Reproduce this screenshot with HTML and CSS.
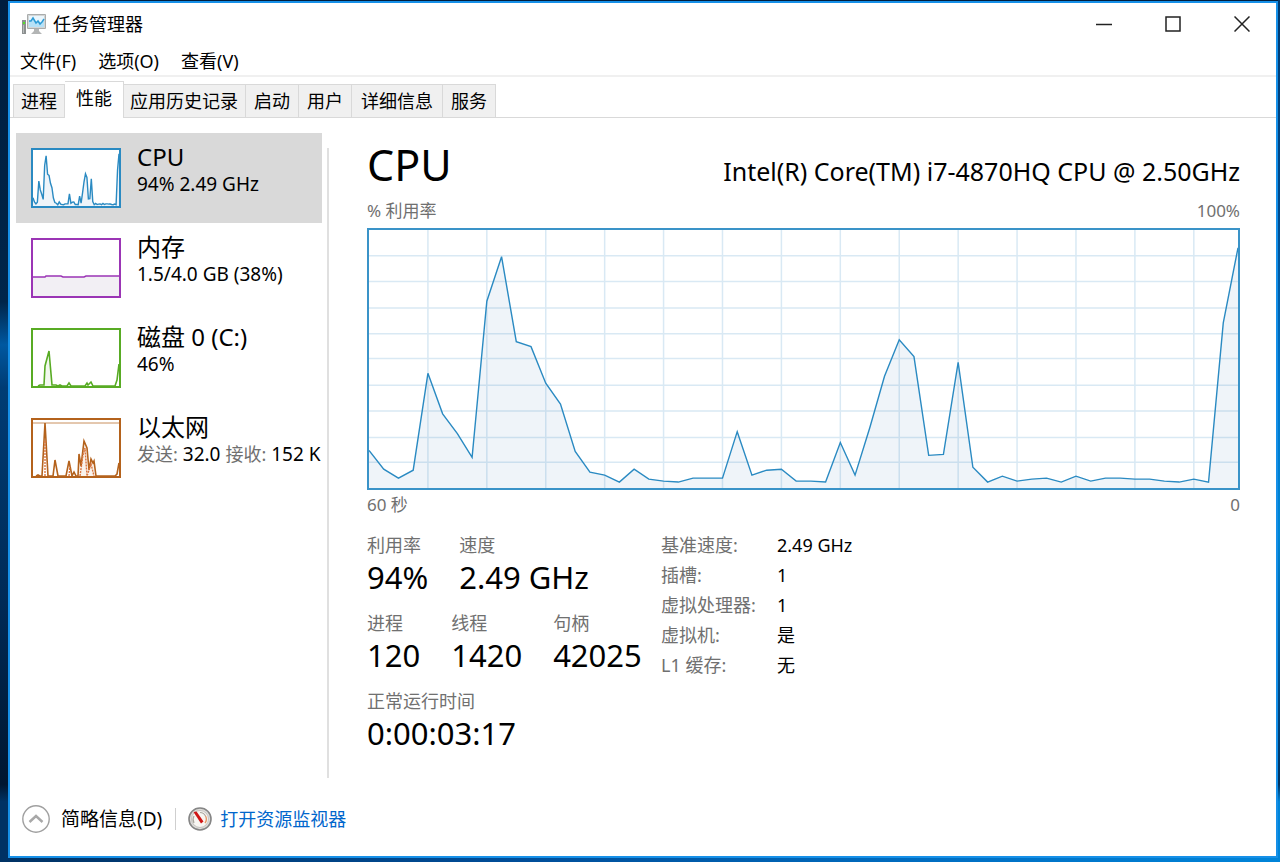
FILE: index.html
```html
<!DOCTYPE html>
<html lang="zh-CN">
<head>
<meta charset="utf-8">
<title>任务管理器</title>
<link rel="stylesheet" href="styles.css">
</head>
<body>
<svg class="defs" aria-hidden="true">
  <symbol id="cpu-history" viewBox="0 0 59 261" preserveAspectRatio="none">
    <polygon class="area" points="0,261 0,223 1,242 2,251 3,243 4,145 5,186 6,206 7,230 8,72 9,27 10,113 11,118 12,155 13,176 14,224 15,245 16,248 17,255 18,242 19,252 20,254 21,255 22,251 23,251 24,251 25,204 26,248 27,243 28,242 29,254 30,254 31,255 32,215 33,248 34,200 35,148 36,111 37,128 38,228 39,227 40,134 41,240 42,255 43,249 44,254 45,252 46,251 47,255 48,249 49,254 50,251 51,251 52,252 53,252 54,254 55,255 56,252 57,255 58,94 59,18 59,261"/>
    <polyline class="line" points="0,223 1,242 2,251 3,243 4,145 5,186 6,206 7,230 8,72 9,27 10,113 11,118 12,155 13,176 14,224 15,245 16,248 17,255 18,242 19,252 20,254 21,255 22,251 23,251 24,251 25,204 26,248 27,243 28,242 29,254 30,254 31,255 32,215 33,248 34,200 35,148 36,111 37,128 38,228 39,227 40,134 41,240 42,255 43,249 44,254 45,252 46,251 47,255 48,249 49,254 50,251 51,251 52,252 53,252 54,254 55,255 56,252 57,255 58,94 59,18"/>
  </symbol>
</svg>
<div class="window">
  <header class="titlebar">
    <svg class="app-icon" viewBox="0 0 24 22" aria-hidden="true">
      <rect x="0" y="7" width="4" height="14" fill="#8c9090"/>
      <rect x="1" y="9" width="2" height="2" fill="#55e02a"/>
      <rect x="1" y="12" width="1" height="8" fill="#b9bcbc"/>
      <rect x="5" y="1" width="19" height="15" rx="1" fill="#a9acac"/>
      <rect x="6" y="2" width="17" height="13" fill="#d4d6d6"/>
      <rect x="7" y="3" width="15" height="11" fill="#e9f6fd"/>
      <path d="M7 8L9 8L11 6L14 10L17 8L19 11L22 7V14H7Z" fill="#b5e1f7"/>
      <path d="M7 8H9L11 5L14 10L16 8L18 11L20 9L22 6" fill="none" stroke="#2c9bd6" stroke-width="1.5"/>
      <path d="M12 16H17V18L20 21H9L12 18Z" fill="#b3b5b5"/>
    </svg>
    <h1 class="title">任务管理器</h1>
    <div class="controls">
      <button class="control" type="button" aria-label="最小化"><svg viewBox="0 0 16 16"><path d="M0 8.5H16"/></svg></button>
      <button class="control" type="button" aria-label="最大化"><svg viewBox="0 0 16 16"><path d="M1 1H15V15H1Z"/></svg></button>
      <button class="control" type="button" aria-label="关闭"><svg viewBox="0 0 16 16"><path d="M0.5 0.5L15.5 15.5M15.5 0.5L0.5 15.5"/></svg></button>
    </div>
  </header>
  <nav class="menu">
    <button type="button">文件(F)</button>
    <button type="button">选项(O)</button>
    <button type="button">查看(V)</button>
  </nav>
  <div class="tabs" role="tablist">
    <button class="tab" type="button" role="tab">进程</button>
    <button class="tab active" type="button" role="tab" aria-selected="true">性能</button>
    <button class="tab history" type="button" role="tab">应用历史记录</button>
    <button class="tab" type="button" role="tab">启动</button>
    <button class="tab" type="button" role="tab">用户</button>
    <button class="tab roomy" type="button" role="tab">详细信息</button>
    <button class="tab" type="button" role="tab">服务</button>
  </div>
  <div class="content">
    <aside class="sidebar">
      <button class="resource selected" type="button">
        <svg class="thumb cpu"><use href="#cpu-history"/></svg>
        <span class="info"><span class="name">CPU</span><span class="detail">94% 2.49 GHz</span></span>
      </button>
      <button class="resource" type="button">
        <svg class="thumb memory" viewBox="0 0 86 56" preserveAspectRatio="none">
          <path class="area" d="M0 56V37H12L13 36H28L30 37H51L53 36H86V56Z"/>
          <path class="line" d="M0 37H12L13 36H28L30 37H51L53 36H86"/>
        </svg>
        <span class="info"><span class="name">内存</span><span class="detail">1.5/4.0 GB (38%)</span></span>
      </button>
      <button class="resource" type="button">
        <svg class="thumb disk" viewBox="0 0 86 56" preserveAspectRatio="none">
          <path class="area" d="M5 56L11 55L12 36L16 21L19 55V56Z"/>
          <path class="line" d="M5 56L7 55H11L12 36L16 21L19 55H23L25 56L27 55L29 56H34L36 53L38 56H52L54 53L55 55L58 52L60 56H82L84 50L86 34"/>
        </svg>
        <span class="info"><span class="name">磁盘 0 (C:)</span><span class="detail">46%</span></span>
      </button>
      <button class="resource" type="button">
        <svg class="thumb network" viewBox="0 0 86 56" preserveAspectRatio="none">
          <path class="thin" d="M0 3H86"/>
          <path class="area" d="M45 56L46 34L49 43L51 21L54 28L55 49L58 39L61 41L62 56Z"/>
          <path class="line" d="M3 56L5 55L7 56H9L12 3L15 56H20L22 40L25 56H33L36 41L39 56L41 52L43 56H45L46 34L48 46L51 21L54 28L56 50L58 39L60 43L61 41L63 56H82L84 54L86 43"/>
          <path class="dots" d="M12 56V20M36 56L37 46M47 56L50 35L52 28L54 56L58 44L61 56"/>
        </svg>
        <span class="info"><span class="name">以太网</span><span class="detail"><span class="muted">发送:</span> 32.0 <span class="muted">接收:</span> 152 K</span></span>
      </button>
    </aside>
    <main class="main">
      <div class="heading">
        <h2>CPU</h2>
        <span class="model">Intel(R) Core(TM) i7-4870HQ CPU @ 2.50GHz</span>
      </div>
      <div class="axis top"><span>% 利用率</span><span>100%</span></div>
      <div class="chart cpu">
        <svg class="grid" viewBox="0 0 59 261" preserveAspectRatio="none" aria-hidden="true">
          <path d="M4 0V261M8 0V261M12 0V261M16 0V261M20 0V261M24 0V261M28 0V261M32 0V261M36 0V261M40 0V261M44 0V261M48 0V261M52 0V261M56 0V261M0 26H59M0 52H59M0 79H59M0 105H59M0 130H59M0 157H59M0 183H59M0 210H59M0 235H59"/>
        </svg>
        <svg class="plot" role="img" aria-label="CPU 利用率"><use href="#cpu-history"/></svg>
      </div>
      <div class="axis bottom"><span>60 秒</span><span>0</span></div>
      <div class="stats">
        <div class="live">
          <dl class="group">
            <div><dt>利用率</dt><dd>94%</dd></div>
            <div><dt>速度</dt><dd>2.49 GHz</dd></div>
          </dl>
          <dl class="group">
            <div><dt>进程</dt><dd>120</dd></div>
            <div><dt>线程</dt><dd>1420</dd></div>
            <div><dt>句柄</dt><dd>42025</dd></div>
          </dl>
          <dl class="group">
            <div><dt>正常运行时间</dt><dd>0:00:03:17</dd></div>
          </dl>
        </div>
        <table class="facts">
          <tr><th scope="row">基准速度:</th><td>2.49 GHz</td></tr>
          <tr><th scope="row">插槽:</th><td>1</td></tr>
          <tr><th scope="row">虚拟处理器:</th><td>1</td></tr>
          <tr><th scope="row">虚拟机:</th><td>是</td></tr>
          <tr><th scope="row">L1 缓存:</th><td>无</td></tr>
        </table>
      </div>
    </main>
  </div>
  <footer class="footer">
    <button class="fewer" type="button">
      <svg viewBox="0 0 28 28" aria-hidden="true"><circle cx="14" cy="14" r="13.2" fill="#fff" stroke="#a0a0a0" stroke-width="1.4"/><path d="M7.500 17L14 11L20.500 17" fill="none" stroke="#a8a8a8" stroke-width="2.4"/></svg>
      <span>简略信息(D)</span>
    </button>
    <span class="separator"></span>
    <a class="monitor" href="#">
      <svg viewBox="0 0 24 24" aria-hidden="true">
        <circle cx="12" cy="12" r="11" fill="#deddda" stroke="#858585" stroke-width="1.6"/>
        <circle cx="12" cy="12" r="8.5" fill="#f8f6f2" stroke="#c5c3c0"/>
        <path d="M6 16A7 7 0 0 1 6 9M12 5.5A6.5 6.5 0 0 1 17.500 9" fill="none" stroke="#aaa79f" stroke-width="1.2"/>
        <path d="M17.500 9A6.500 6.500 0 0 1 17 16" fill="none" stroke="#e49a6c" stroke-width="1.4"/>
        <path d="M5.500 5L8.500 4.500L15.500 14.500L13 16.500Z" fill="#cf1616"/>
      </svg>
      <span>打开资源监视器</span>
    </a>
  </footer>
</div>
</body>
</html>
```
FILE: styles.css
```css
* {
  box-sizing: border-box;
}

body {
  margin: 0;
  min-height: 100vh;
  display: flex;
  padding: 1px 2px 4px 8px;
  font-family: "Noto Sans", "Noto Sans CJK SC", sans-serif;
  font-size: 18px;
  line-height: 20px;
  color: #000;
  background:
    linear-gradient(90deg, #003264, #004d98 40%, #0070c4 75%, #0084d8) bottom / 100% 4px no-repeat,
    linear-gradient(180deg, #003a70, #004a8c 25%, #0078cc 45%, #0086d4 62%, #004a86 80%, #003260 91%, #0084d8 93%) right / 2px 100% no-repeat,
    linear-gradient(180deg, #001e3e, #00254a 35%, #0058a0 40%, #003c74 45%, #002a56 70%, #001630 91%, #003264 93%);
}

h1,
h2,
dl,
dd {
  margin: 0;
  font-weight: 400;
}

button {
  margin: 0;
  padding: 0;
  border: 0;
  background: none;
  font: inherit;
  color: inherit;
}

.defs {
  position: absolute;
  width: 0;
  height: 0;
}

.window {
  flex: 1;
  min-width: 0;
  display: flex;
  flex-direction: column;
  border: 2px solid #1690e8;
  background: #fff;
}

.titlebar {
  display: flex;
  align-items: center;
  height: 42px;
  padding-left: 12px;
}

.app-icon {
  width: 24px;
  height: 22px;
}

.title {
  flex: 1;
  margin-left: 7px;
  font-size: 18px;
}

.controls {
  display: flex;
}

.control {
  width: 69px;
  height: 42px;
  display: flex;
  align-items: center;
  justify-content: center;
}

.control svg {
  width: 16px;
  height: 16px;
  fill: none;
  stroke: #222;
  stroke-width: 1.5;
}

.menu {
  display: flex;
  gap: 22px;
  padding: 6px 10px 4px;
  border-bottom: 2px solid #f0f0f0;
}

.tabs {
  display: flex;
  align-items: flex-end;
  height: 41px;
  padding-left: 3px;
  border-bottom: 1px solid #d9d9d9;
}

.tab {
  height: 33px;
  padding: 0 8px;
  border: 1px solid #d9d9d9;
  border-width: 1px 1px 0 0;
  background: #f0f0f0;
}

.tab:first-child {
  border-left-width: 1px;
  padding: 0 7px;
}

.tab.active {
  height: 37px;
  margin-bottom: -1px;
  padding: 0 11px 4px;
  background: #fff;
}

.tab.history {
  padding: 0 7px 0 6px;
}

.tab.roomy {
  padding: 0 9px;
}

.content {
  flex: 1;
  display: grid;
  grid-template-columns: 311px 1fr;
  padding: 15px 36px 4px 6px;
}

.sidebar {
  overflow: hidden;
}

.resource {
  display: flex;
  gap: 16px;
  width: calc(100% - 5px);
  height: 90px;
  padding: 15px 0 0 15px;
  text-align: left;
  white-space: nowrap;
}

.resource.selected {
  background: #d9d9d9;
}

.thumb {
  flex: none;
  width: 90px;
  height: 60px;
  border: 2px solid;
  background: #fff;
}

.info {
  display: flex;
  flex-direction: column;
  margin-top: -5px;
}

.name {
  font-size: 24px;
  line-height: 28px;
}

.detail {
  font-size: 19px;
  line-height: 26px;
}

.muted {
  font-size: 18px;
  color: #707070;
}

.cpu {
  color: #2a8ac2;
}

.memory {
  color: #9b35b5;
}

.disk {
  color: #58ab24;
}

.network {
  color: #b4621c;
}

.area {
  fill: currentColor;
  fill-opacity: 0.08;
}

.cpu .area,
#cpu-history .area {
  fill: #2068b0;
  fill-opacity: 0.07;
}

.memory .area {
  fill: #5a3070;
}

.line,
.thin,
.dots {
  fill: none;
  stroke: currentColor;
  stroke-width: 1.4;
  vector-effect: non-scaling-stroke;
}

.thumb .line {
  stroke-width: 1.6;
}

.thin {
  stroke-width: 1;
  opacity: 0.7;
}

.dots {
  stroke: #d9743e;
  stroke-dasharray: 2 1;
}

.main {
  margin-top: 15px;
  padding-left: 38px;
  border-left: 2px solid #e0e0e0;
}

.heading {
  display: flex;
  align-items: baseline;
  justify-content: space-between;
  height: 34px;
}

.heading h2 {
  font-size: 43px;
  line-height: 34px;
}

.model {
  font-size: 25px;
  line-height: 28px;
}

.axis {
  display: flex;
  justify-content: space-between;
  font-size: 17px;
  color: #707070;
}

.axis.top {
  margin: 19px 0 7px;
}

.axis.bottom {
  margin: 5px 0 20px;
}

.chart {
  display: grid;
  height: 262px;
  border: 2px solid #3a93c8;
}

.grid,
.plot {
  grid-area: 1 / 1;
  width: 100%;
  height: 258px;
}

.grid path {
  fill: none;
  stroke: #d9e9f4;
  stroke-width: 1.5;
  vector-effect: non-scaling-stroke;
}

.stats {
  display: flex;
}

.live {
  width: 294px;
  display: flex;
  flex-direction: column;
  gap: 18px;
}

.group {
  display: flex;
  gap: 31px;
}

.group dt {
  color: #707070;
}

.group dd {
  margin-top: 4px;
  font-size: 31px;
  line-height: 36px;
}

.facts {
  margin-top: -5px;
  border-collapse: collapse;
  align-self: flex-start;
}

.facts th,
.facts td {
  height: 30px;
  padding: 0;
  font-weight: 400;
  text-align: left;
}

.facts th {
  width: 116px;
  color: #707070;
}

.footer {
  display: flex;
  align-items: center;
  height: 74px;
  padding-left: 12px;
}

.fewer,
.monitor {
  display: flex;
  align-items: center;
}

.fewer {
  gap: 11px;
  font-size: 19px;
}

.fewer svg {
  width: 28px;
  height: 28px;
}

.separator {
  width: 1px;
  height: 22px;
  margin: 0 12px 0 13px;
  background: #cfcfcf;
}

.monitor {
  gap: 8px;
  color: #0066cc;
  text-decoration: none;
}

.monitor svg {
  width: 24px;
  height: 24px;
}
```
